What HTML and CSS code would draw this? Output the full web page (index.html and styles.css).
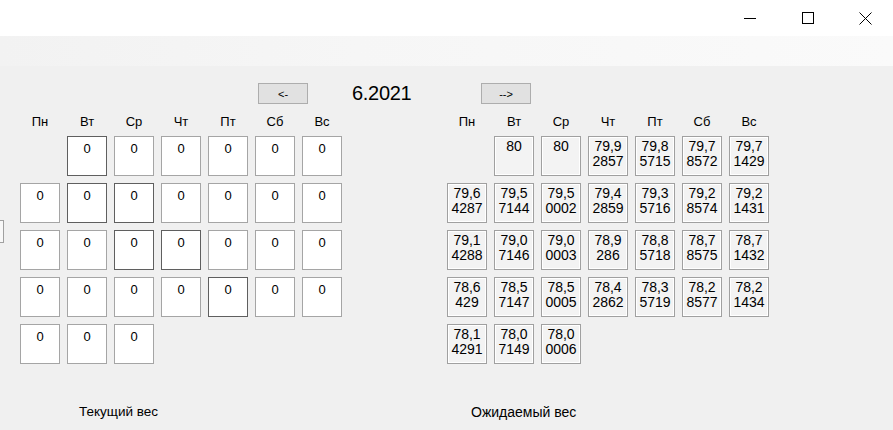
FILE: index.html
```html
<!DOCTYPE html>
<html>
<head>
<meta charset="utf-8">
<link rel="stylesheet" href="styles.css">
</head>
<body>
<div class="window">
  <div class="titlebar">
    <div class="tb-btn">
      <svg width="12" height="12" viewBox="0 0 12 12"><line x1="0" y1="6.5" x2="12" y2="6.5" stroke="#000" stroke-width="1"/></svg>
    </div>
    <div class="tb-btn">
      <svg width="12" height="12" viewBox="0 0 12 12"><rect x="0.5" y="0.5" width="11" height="11" fill="none" stroke="#000" stroke-width="1"/></svg>
    </div>
    <div class="tb-btn tb-last">
      <svg width="13" height="13" viewBox="0 0 13 13"><path d="M0.5 0.5 L12.5 12.5 M12.5 0.5 L0.5 12.5" stroke="#000" stroke-width="1" fill="none"/></svg>
    </div>
  </div>
  <div class="menubar"></div>
  <div class="content">
    <div class="nav">
      <div class="btn">&lt;-</div>
      <div class="date">6.2021</div>
      <div class="btn">--&gt;</div>
    </div>
    <div class="main">
      <div class="stub"></div>
      <div class="section left">
        <div class="heads">
          <span>Пн</span><span>Вт</span><span>Ср</span><span>Чт</span><span>Пт</span><span>Сб</span><span>Вс</span>
        </div>
        <div class="grid">
          <div class="empty"></div>
          <div class="box dark">0</div><div class="box">0</div><div class="box">0</div><div class="box">0</div><div class="box">0</div><div class="box">0</div>
          <div class="box">0</div><div class="box dark">0</div><div class="box dark">0</div><div class="box">0</div><div class="box">0</div><div class="box">0</div><div class="box">0</div>
          <div class="box">0</div><div class="box">0</div><div class="box dark">0</div><div class="box dark">0</div><div class="box">0</div><div class="box">0</div><div class="box">0</div>
          <div class="box">0</div><div class="box">0</div><div class="box">0</div><div class="box">0</div><div class="box dark">0</div><div class="box">0</div><div class="box">0</div>
          <div class="box">0</div><div class="box">0</div><div class="box">0</div>
        </div>
      </div>
      <div class="section right">
        <div class="heads">
          <span>Пн</span><span>Вт</span><span>Ср</span><span>Чт</span><span>Пт</span><span>Сб</span><span>Вс</span>
        </div>
        <div class="grid">
          <div class="empty"></div>
          <div class="cell">80</div><div class="cell">80</div><div class="cell">79,9<br>2857</div><div class="cell">79,8<br>5715</div><div class="cell">79,7<br>8572</div><div class="cell">79,7<br>1429</div>
          <div class="cell">79,6<br>4287</div><div class="cell">79,5<br>7144</div><div class="cell">79,5<br>0002</div><div class="cell">79,4<br>2859</div><div class="cell">79,3<br>5716</div><div class="cell">79,2<br>8574</div><div class="cell">79,2<br>1431</div>
          <div class="cell">79,1<br>4288</div><div class="cell">79,0<br>7146</div><div class="cell">79,0<br>0003</div><div class="cell">78,9<br>286</div><div class="cell">78,8<br>5718</div><div class="cell">78,7<br>8575</div><div class="cell">78,7<br>1432</div>
          <div class="cell">78,6<br>429</div><div class="cell">78,5<br>7147</div><div class="cell">78,5<br>0005</div><div class="cell">78,4<br>2862</div><div class="cell">78,3<br>5719</div><div class="cell">78,2<br>8577</div><div class="cell">78,2<br>1434</div>
          <div class="cell">78,1<br>4291</div><div class="cell">78,0<br>7149</div><div class="cell">78,0<br>0006</div>
        </div>
      </div>
    </div>
    <div class="labels">
      <div class="lbl lbl-left">Текущий вес</div>
      <div class="lbl">Ожидаемый вес</div>
    </div>
  </div>
</div>
</body>
</html>
```
FILE: styles.css
```css
* { box-sizing: border-box; }
html, body {
  margin: 0;
  padding: 0;
  width: 893px;
  height: 430px;
  overflow: hidden;
  background: #f0f0f0;
  font-family: "Liberation Sans", Arial, sans-serif;
  color: #000;
}
.window {
  width: 893px;
  height: 430px;
  display: flex;
  flex-direction: column;
}
.titlebar {
  height: 36px;
  background: #ffffff;
  display: flex;
  justify-content: flex-end;
}
.tb-btn {
  width: 58px;
  height: 36px;
  display: flex;
  align-items: center;
  justify-content: center;
}
.tb-last { width: 56px; }
.menubar {
  height: 30px;
  background: linear-gradient(to right, #f2f2f2, #f6f6f6 40%, #fafafa);
}
.content {
  flex: 1;
  background: #f0f0f0;
}
.nav {
  display: flex;
  align-items: center;
  margin-top: 17px;
  padding-left: 258px;
  height: 21px;
}
.btn {
  width: 50px;
  height: 21px;
  background: #e1e1e1;
  border: 1px solid #adadad;
  font-size: 11px;
  display: flex;
  align-items: center;
  justify-content: center;
}
.date {
  width: 173px;
  padding-left: 44px;
  font-size: 20px;
  line-height: 21px;
  height: 21px;
  letter-spacing: -0.3px;
}
.main {
  display: flex;
  align-items: flex-start;
  margin-top: 10px;
}
.stub {
  width: 4px;
  height: 23px;
  margin-top: 106px;
  border: 1px solid #a0a0a0;
  border-left: none;
  background: #f8f8f8;
}
.section.left { margin-left: 16px; }
.section.right { margin-left: 105px; }
.heads {
  display: grid;
  grid-template-columns: repeat(7, 40px);
  column-gap: 7px;
  font-size: 13px;
  line-height: 15px;
  height: 15px;
  text-align: center;
  margin-bottom: 7px;
}
.grid {
  display: grid;
  grid-template-columns: repeat(7, 40px);
  grid-auto-rows: 40px;
  gap: 7px;
}
.box {
  background: #ffffff;
  border: 1px solid #a5a5a5;
  text-align: center;
  font-size: 13px;
  line-height: 15px;
  padding-top: 4px;
}
.box.dark { border-color: #5f5f5f; }
.cell {
  background: #f3f3f3;
  border: 1px solid #a0a0a0;
  box-shadow: inset 1px 1px 0 #ffffff, inset -1px -1px 0 #ffffff;
  text-align: center;
  font-size: 14px;
  line-height: 15px;
  padding-top: 2px;
}
.labels {
  display: flex;
  margin-top: 40px;
  padding-left: 79px;
  font-size: 14px;
  line-height: 16px;
}
.lbl-left { width: 392px; font-size: 13.5px; }
```
